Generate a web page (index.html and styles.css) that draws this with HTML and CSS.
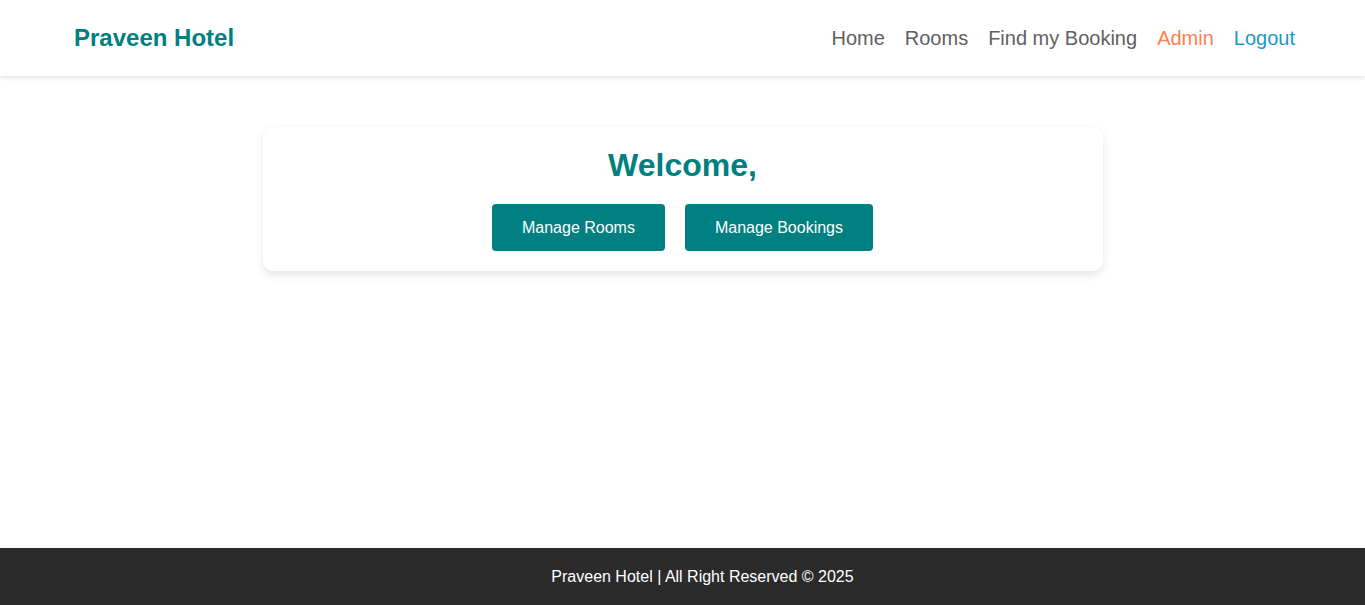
FILE: index.html
```html
<!DOCTYPE html>
<html lang="en">
<head>
<meta charset="utf-8">
<title>Praveen Hotel</title>
<link rel="stylesheet" href="styles.css">
</head>
<body>
<header class="navbar">
  <a class="logo" href="#">Praveen Hotel</a>
  <nav class="nav-links">
    <a href="#" class="nav-link">Home</a>
    <a href="#" class="nav-link">Rooms</a>
    <a href="#" class="nav-link">Find my Booking</a>
    <a href="#" class="nav-link admin">Admin</a>
    <a href="#" class="nav-link logout">Logout</a>
  </nav>
</header>
<main class="content">
  <section class="card">
    <h2 class="welcome">Welcome,</h2>
    <div class="actions">
      <button class="btn">Manage Rooms</button>
      <button class="btn">Manage Bookings</button>
    </div>
  </section>
</main>
<footer class="footer">Praveen Hotel | All Right Reserved © 2025</footer>
</body>
</html>
```
FILE: styles.css
```css
* { box-sizing: border-box; }
html, body { margin: 0; padding: 0; }
body {
  font-family: "Liberation Sans", Arial, sans-serif;
  min-height: 100vh;
  display: flex;
  flex-direction: column;
  background: #fff;
}
.navbar {
  height: 76px;
  display: flex;
  align-items: center;
  justify-content: space-between;
  padding: 0 70px 0 74px;
  background: #fff;
  box-shadow: 0 2px 4px rgba(0,0,0,0.1);
  position: relative;
  z-index: 1;
}
.logo {
  color: #008080;
  font-size: 24px;
  font-weight: bold;
  text-decoration: none;
}
.nav-links {
  display: flex;
  gap: 20px;
}
.nav-link {
  font-size: 20px;
  color: #606060;
  text-decoration: none;
}
.nav-link.admin { color: #ff7f50; }
.nav-link.logout { color: #1b98c6; }
.content {
  flex: 1;
  padding: 51px 20px 20px;
}
.card {
  max-width: 840px;
  margin: 0 auto;
  background: #fff;
  border-radius: 10px;
  box-shadow: 0 4px 10px rgba(0,0,0,0.1);
  padding: 20px;
  text-align: center;
}
.welcome {
  margin: 0 0 20px;
  color: #008080;
  font-size: 32px;
  line-height: 37px;
  font-weight: bold;
}
.actions {
  display: flex;
  justify-content: center;
  gap: 20px;
}
.btn {
  font-family: "Liberation Sans", Arial, sans-serif;
  background: #008080;
  color: #fff;
  border: none;
  border-radius: 4px;
  font-size: 16px;
  height: 47px;
  padding: 0 30px;
  cursor: pointer;
}
.footer {
  background: #2b2b2b;
  color: #fff;
  height: 57px;
  display: flex;
  align-items: center;
  justify-content: center;
  padding-left: 40px;
  font-size: 16px;
}
```
